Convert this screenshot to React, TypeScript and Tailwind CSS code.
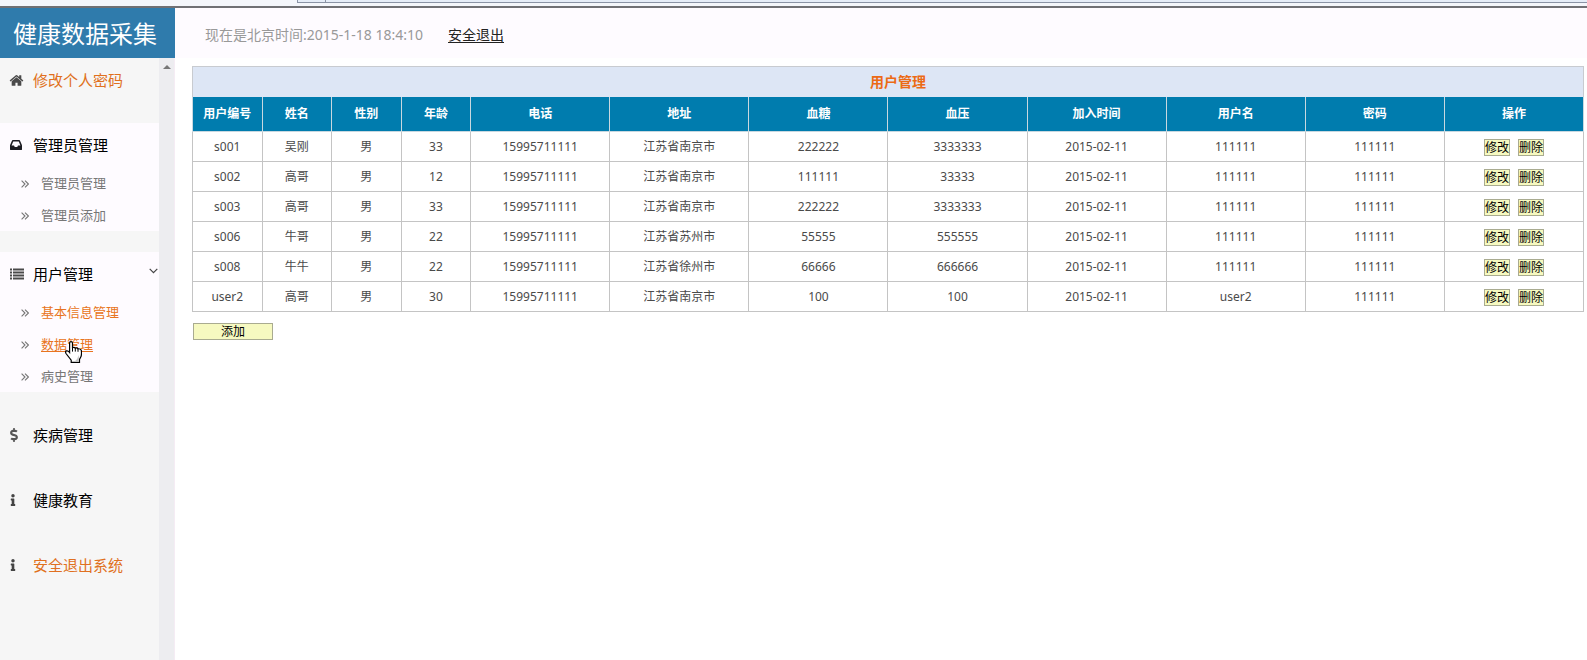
import React from "react";
import { FaDollarSign, FaInfo } from "react-icons/fa";

const HomeIcon = () => (
  <svg viewBox="0 0 1792 1792" className="-ml-px size-[15px] fill-[#4a4a4a]" aria-hidden="true">
    <path d="M1472 992v480q0 26-19 45t-45 19h-384v-384h-256v384h-384q-26 0-45-19t-19-45v-480q0-1 .5-3t.5-3l575-474 575 474q1 2 1 6zm223-69l-62 74q-8 9-21 11h-3q-13 0-21-7l-692-577-692 577q-12 8-24 7-13-2-21-11l-62-74q-8-10-7-23.5t11-21.5l719-599q32-26 76-26t76 26l244 204v-195q0-14 9-23t23-9h192q14 0 23 9t9 23v408l219 182q10 8 11 21.5t-7 23.5z" />
  </svg>
);

const InboxIcon = () => (
  <svg viewBox="128 128 1536 1536" className="size-3 fill-[#1c1c22]" aria-hidden="true">
    <path d="M1151 960h316q-1-3-2.5-8t-2.5-8l-212-496h-708l-212 496q-1 2-2.5 8t-2.5 8h316l95 192h320zm513 30v482q0 26-19 45t-45 19h-1408q-26 0-45-19t-19-45v-482q0-62 25-123l238-552q10-25 36.5-42t52.5-17h832q26 0 52.5 17t36.5 42l238 552q25 61 25 123z" />
  </svg>
);

const ListIcon = () => (
  <svg viewBox="0 0 14 12" className="h-3 w-3.5 fill-[#4a4a4a]" aria-hidden="true">
    {[0, 3, 6, 9].map((y) => (
      <g key={y}>
        <rect x="0" y={y + 0.5} width="2" height="2" />
        <rect x="3" y={y + 0.5} width="11" height="2" />
      </g>
    ))}
  </svg>
);

const DoubleAngle = () => (
  <svg viewBox="0 0 8 8" className="size-2 fill-none stroke-[#777]" aria-hidden="true">
    <path d="M.6.6 4 4 .6 7.400M4 .6 7.400 4 4 7.400" strokeWidth="1.100" />
  </svg>
);

const HandCursor = () => (
  <svg
    viewBox="0 0 17 22"
    className="pointer-events-none absolute top-1/2 left-6 z-10 h-[22px] w-[17px] -translate-y-1"
    aria-hidden="true"
  >
    <path
      d="M4.600 11.500V2Q4.600.6 6 .6T7.500 2v4.600q1.800-.9 2.800.6 1.700-.8 2.700.6 2.300-.4 3.300 1.500.5 3-.2 6L14.500 18.500v2.900H6.200v-2.300L1 12.500Q0 10.600 1.300 9.900q1.700-.6 3.300 1.600z"
      fill="#fff"
      stroke="#000"
      strokeWidth="1.200"
    />
    <path d="M13.800 14v6.700H9.500Q12.800 18 13.800 14z" fill="#c4c4c4" />
    <path d="M7.500 6.600v4M10.300 7.200v3.400M13 7.800v3" stroke="#000" fill="none" />
  </svg>
);

type Sub = { label: string; tone: string; cursor?: boolean };
type Item = { label: string; icon: React.ReactNode; tone: string; subs?: Sub[]; open?: boolean };

const menu: Item[] = [
  { label: "修改个人密码", icon: <HomeIcon />, tone: "text-[#e07020]" },
  {
    label: "管理员管理",
    icon: <InboxIcon />,
    tone: "text-black",
    subs: [
      { label: "管理员管理", tone: "text-[#777]" },
      { label: "管理员添加", tone: "text-[#777]" },
    ],
  },
  {
    label: "用户管理",
    icon: <ListIcon />,
    tone: "text-black",
    open: true,
    subs: [
      { label: "基本信息管理", tone: "text-[#e87420]" },
      { label: "数据管理", tone: "text-[#e87420] underline underline-offset-2", cursor: true },
      { label: "病史管理", tone: "text-[#777]" },
    ],
  },
  { label: "疾病管理", icon: <FaDollarSign className="size-3.5 -ml-[3px] text-[#555]" />, tone: "text-black" },
  { label: "健康教育", icon: <FaInfo className="size-3 -ml-[3px] text-[#444]" />, tone: "text-black" },
  { label: "安全退出系统", icon: <FaInfo className="size-3 -ml-[3px] text-[#444]" />, tone: "text-[#e07020]" },
];

const columns = [
  "用户编号", "姓名", "性别", "年龄", "电话", "地址",
  "血糖", "血压", "加入时间", "用户名", "密码", "操作",
];

const rows = [
  ["s001", "吴刚", "男", "33", "15995711111", "江苏省南京市", "222222", "3333333", "2015-02-11", "111111", "111111"],
  ["s002", "高哥", "男", "12", "15995711111", "江苏省南京市", "111111", "33333", "2015-02-11", "111111", "111111"],
  ["s003", "高哥", "男", "33", "15995711111", "江苏省南京市", "222222", "3333333", "2015-02-11", "111111", "111111"],
  ["s006", "牛哥", "男", "22", "15995711111", "江苏省苏州市", "55555", "555555", "2015-02-11", "111111", "111111"],
  ["s008", "牛牛", "男", "22", "15995711111", "江苏省徐州市", "66666", "666666", "2015-02-11", "111111", "111111"],
  ["user2", "高哥", "男", "30", "15995711111", "江苏省南京市", "100", "100", "2015-02-11", "user2", "111111"],
];

const smallButton = "h-[17px] border border-[#a9ab90] bg-[#f6f9c0] text-xs leading-[15px] text-black";

function Sidebar() {
  return (
    <aside className="flex w-[175px] shrink-0 bg-[#f6f6f6]">
      <nav className="flex grow flex-col gap-[21px]">
        {menu.map((item) => (
          <section key={item.label} className={item.subs ? "bg-[#fefbff]" : ""}>
            <a href="#" className={`flex h-11 items-center pl-2.5 text-[15px] ${item.tone}`}>
              <span className="flex w-[23px] shrink-0 items-center">{item.icon}</span>
              {item.label}
              {item.open && (
                <svg viewBox="0 0 9 6" className="mr-px mb-1.5 ml-auto h-1.5 w-[9px] fill-none stroke-[#444]" aria-hidden="true">
                  <path d="M.7.8 4.500 4.600 8.300.8" strokeWidth="1.200" />
                </svg>
              )}
            </a>
            {item.subs && (
              <ul>
                {item.subs.map((sub) => (
                  <li key={sub.label} className="flex h-8 items-center gap-3 pt-0.5 pl-[21px] text-[13px]">
                    <DoubleAngle />
                    <a href="#" className={`relative ${sub.tone}`}>
                      {sub.label}
                      {sub.cursor && <HandCursor />}
                    </a>
                  </li>
                ))}
              </ul>
            )}
          </section>
        ))}
      </nav>
      <div className="flex w-4 shrink-0 justify-center border-r border-[#f5ecf4] bg-[#ededf0] pt-[7px]">
        <svg viewBox="0 0 8 4" className="h-1 w-2 fill-[#777]" aria-hidden="true">
          <path d="M4 0 8 4H0z" />
        </svg>
      </div>
    </aside>
  );
}

function UserTable() {
  return (
    <table className="w-full table-fixed border-collapse text-center text-xs text-[#4a4a4a]">
      <colgroup>
        {columns.map((name, i) => (
          <col key={name} className={i < 4 ? "w-[5%]" : "w-[10%]"} />
        ))}
      </colgroup>
      <thead>
        <tr className="h-[30px] bg-[#dde6f5]">
          <th colSpan={12} className="border border-b-0 border-[#c8cbd0] pl-5 text-sm font-bold text-[#ec6a14]">
            用户管理
          </th>
        </tr>
        <tr className="h-[35px] bg-[#007cae] text-white">
          {columns.map((name) => (
            <th key={name} className="border border-t-0 border-[#c8d8e0] pt-px font-bold">
              {name}
            </th>
          ))}
        </tr>
      </thead>
      <tbody>
        {rows.map((row) => (
          <tr key={row[0]} className="h-[30px]">
            {row.map((cell, i) => (
              <td key={i} className="border border-[#c4c4c4]">
                {cell}
              </td>
            ))}
            <td className="border border-[#c4c4c4]">
              <div className="flex justify-center gap-2 pt-0.5">
                <button type="button" className={`w-[26px] ${smallButton}`}>修改</button>
                <button type="button" className={`w-[26px] ${smallButton}`}>删除</button>
              </div>
            </td>
          </tr>
        ))}
      </tbody>
    </table>
  );
}

export default function App() {
  return (
    <div className="flex min-h-screen flex-col bg-white font-['Noto_Sans','Noto_Sans_CJK_SC',sans-serif]">
      <div className="flex h-2 flex-col border-b-2 border-[#707074] bg-[#f4f6fb]">
        <div className="ml-[297px] flex h-[3px] border-b border-l border-[#8a93a5] bg-[#e6edf8]">
          <span className="w-7 border-r border-[#8a93a5]" />
        </div>
      </div>
      <header className="flex h-[50px] items-center bg-[#fefbff]">
        <h1 className="flex h-full w-[175px] shrink-0 items-center bg-[#2f7bac] pt-0.5 pl-[13px] text-2xl text-white">
          健康数据采集
        </h1>
        <div className="flex items-center gap-[25px] pt-[3px] pl-[30px] text-sm">
          <p className="text-[#999]">现在是北京时间:2015-1-18 18:4:10</p>
          <a href="#" className="text-[#222] underline underline-offset-2">安全退出</a>
        </div>
      </header>
      <div className="flex grow">
        <Sidebar />
        <main className="min-w-0 grow pt-2 pr-[3px] pl-[17px]">
          <UserTable />
          <button type="button" className={`mt-[11px] ml-px block w-20 ${smallButton}`}>添加</button>
        </main>
      </div>
    </div>
  );
}
